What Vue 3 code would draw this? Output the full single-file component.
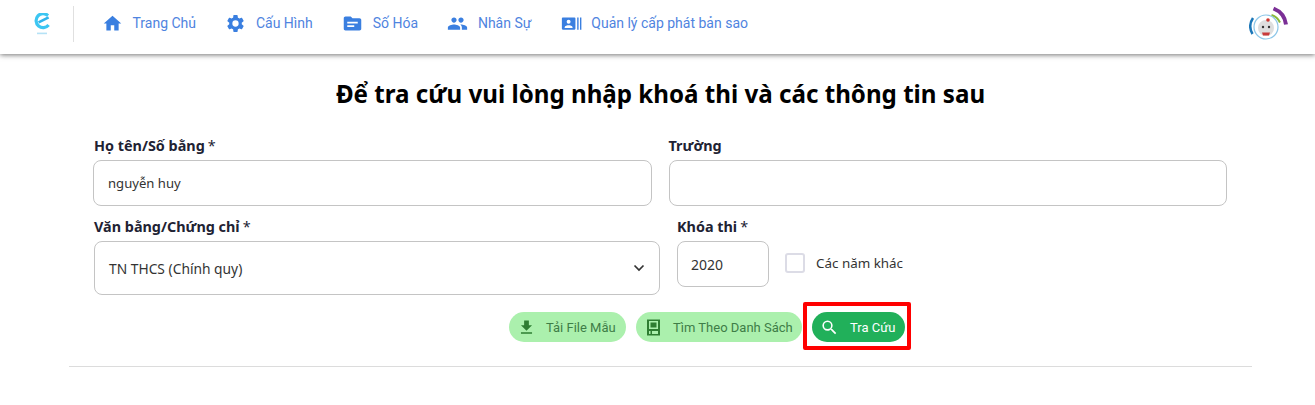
<script setup>
const nav = [
  { label: 'Trang Chủ', key: 'home' },
  { label: 'Cấu Hình', key: 'gear' },
  { label: 'Số Hóa', key: 'folder' },
  { label: 'Nhân Sự', key: 'people' },
  { label: 'Quản lý cấp phát bản sao', key: 'card' },
]
const paths = {
  home: 'M10 20v-6h4v6h5v-8h3L12 3 2 12h3v8z',
  gear: 'M19.14 12.94c.04-.3.06-.61.06-.94 0-.32-.02-.64-.07-.94l2.03-1.58a.49.49 0 0 0 .12-.61l-1.92-3.32a.49.49 0 0 0-.59-.22l-2.39.96c-.5-.38-1.03-.7-1.62-.94l-.36-2.54a.48.48 0 0 0-.48-.41h-3.84c-.24 0-.43.17-.47.41l-.36 2.54c-.59.24-1.13.57-1.62.94l-2.39-.96c-.22-.08-.47 0-.59.22L2.74 8.87c-.12.21-.08.47.12.61l2.03 1.58c-.05.3-.09.63-.09.94s.02.64.07.94l-2.03 1.58a.49.49 0 0 0-.12.61l1.92 3.32c.12.22.37.29.59.22l2.39-.96c.5.38 1.03.7 1.62.94l.36 2.54c.05.24.24.41.48.41h3.84c.24 0 .44-.17.47-.41l.36-2.54c.59-.24 1.13-.56 1.62-.94l2.39.96c.22.08.47 0 .59-.22l1.92-3.32c.12-.22.07-.47-.12-.61l-2.01-1.58zM12 15.6A3.6 3.6 0 1 1 12 8.4a3.6 3.6 0 0 1 0 7.2z',
  folder: 'M20 6h-8l-2-2H4c-1.1 0-2 .9-2 2v12c0 1.1.9 2 2 2h16c1.1 0 2-.9 2-2V8c0-1.1-.9-2-2-2zm-6 10H6v-2h8v2zm4-4H6v-2h12v2z',
  people: 'M16 11c1.66 0 2.99-1.34 2.99-3S17.66 5 16 5s-3 1.34-3 3 1.34 3 3 3zm-8 0c1.66 0 2.99-1.34 2.99-3S9.66 5 8 5 5 6.34 5 8s1.34 3 3 3zm0 2c-2.33 0-7 1.17-7 3.5V19h14v-2.5C15 14.17 10.33 13 8 13zm8 0c-.29 0-.62.02-.97.05 1.16.84 1.97 1.97 1.97 3.45V19h6v-2.5c0-2.33-4.67-3.5-7-3.5z',
  card: 'M18.5 5v14h1.6V5h-1.6zm3.2 0v14h1.6V5h-1.6zM15.5 5H2c-.55 0-1 .45-1 1v12c0 .55.45 1 1 1h13.5c.55 0 1-.45 1-1V6c0-.55-.45-1-1-1zM8.7 7.75a2.25 2.25 0 1 1 0 4.5 2.25 2.25 0 0 1 0-4.5zM13.2 17h-9v-.75c0-1.5 3-2.25 4.5-2.25s4.5.75 4.5 2.25V17z',
}
</script>

<template>
  <div class="page">
    <header class="topbar">
      <div class="brand">
        <svg class="logo" width="18" height="24" viewBox="0 0 18 24">
          <path d="M15 2.6A7 7 0 1 0 15.6 12" stroke="#3cc6f2" stroke-width="3.2" fill="none"/>
          <path d="M15.6 4.4 5.6 9.4" stroke="#2fb4ec" stroke-width="2.6" fill="none"/>
          <rect x="4" y="19.6" width="10" height="1.6" fill="#b5e2f6"/>
        </svg>
      </div>
      <nav class="nav">
        <a v-for="item in nav" :key="item.key" class="nav-item">
          <svg class="nav-icon" width="21" height="21" viewBox="0 0 24 24">
            <path :d="paths[item.key]" fill="#3a7fe0"/>
          </svg>
          <span>{{ item.label }}</span>
        </a>
      </nav>
      <svg class="avatar" width="40" height="36" viewBox="0 0 40 36">
        <path d="M4 13 A15 15 0 0 0 3.500 29" stroke="#1c77b8" stroke-width="2.5" fill="none"/>
        <path d="M24.500 3.500 A20 20 0 0 1 37 19.500" stroke="#7b2f96" stroke-width="4" fill="none"/>
        <path d="M22.500 10 A14 14 0 0 1 31 17.500" stroke="#8cb83a" stroke-width="2" fill="none"/>
        <circle cx="17" cy="22" r="12" fill="#fff" stroke="#8cc6e8" stroke-width="1.2"/>
        <circle cx="17" cy="23" r="8" fill="#dedede"/>
        <circle cx="14" cy="22" r="1.2" fill="#333"/>
        <circle cx="20" cy="22" r="1.2" fill="#333"/>
        <circle cx="19" cy="15" r="1.8" fill="#d0352f"/>
        <path d="M13 27.500h8l-1 3h-6z" fill="#c93a3a"/>
      </svg>
    </header>

    <main class="main">
      <h1 class="title">Để tra cứu vui lòng nhập khoá thi và các thông tin sau</h1>
      <section class="form">
        <div class="row row-one">
          <div class="field">
            <label class="label shifted">Họ tên/Số bằng<em>*</em></label>
            <div class="box box-46 name">nguyễn huy</div>
          </div>
          <div class="field">
            <label class="label">Trường</label>
            <div class="box box-46"></div>
          </div>
        </div>
        <div class="row row-two">
          <div class="field select-field">
            <label class="label">Văn bằng/Chứng chỉ<em>*</em></label>
            <div class="box box-54 select">
              <span>TN THCS (Chính quy)</span>
              <svg width="12" height="8" viewBox="0 0 12 8"><path d="M1.500 1.500 6 6l4.500-4.500" stroke="#333" stroke-width="1.700" fill="none"/></svg>
            </div>
          </div>
          <div class="field year-field">
            <label class="label">Khóa thi<em>*</em></label>
            <div class="box box-46 year">2020</div>
          </div>
          <div class="check">
            <span class="checkbox"></span>
            <span>Các năm khác</span>
          </div>
        </div>
        <div class="actions">
          <button class="btn light first">
            <svg width="19" height="19" viewBox="0 0 24 24"><path d="M19 9h-4V3H9v6H5l7 7 7-7zM5 18v2h14v-2H5z" fill="#2e7d32"/></svg>
            <span>Tải File Mẫu</span>
          </button>
          <button class="btn light second">
            <svg width="19" height="19" viewBox="0 0 19 19"><path d="M3 1.500h13v16H3zM5 3v8h9V3zM6.500 4.500h6v5h-6zM5 13v3h1.500v-3zM8 13v3h6v-3z" fill="#2e7d32" fill-rule="evenodd"/></svg>
            <span>Tìm Theo Danh Sách</span>
          </button>
          <div class="highlight">
            <button class="btn solid">
              <svg width="19" height="19" viewBox="0 0 24 24"><path d="M15.500 14h-.79l-.28-.27A6.470 6.470 0 0 0 16 9.500 6.500 6.500 0 1 0 9.500 16c1.610 0 3.090-.59 4.230-1.570l.27.28v.79l5 4.990L20.490 19l-4.990-5zm-6 0A4.500 4.500 0 1 1 9.500 5a4.500 4.500 0 0 1 0 9z" fill="#fff"/></svg>
              <span>Tra Cứu</span>
            </button>
          </div>
        </div>
      </section>
      <hr class="rule" />
    </main>
  </div>
</template>

<style>
html, body { margin: 0; background: #fff; overflow: hidden; }
</style>

<style scoped>
.page { width: 1315px; height: 405px; background: #fff; font-family: "Noto Sans", sans-serif; color: #212529; }
.topbar {
  height: 54px; display: flex; align-items: flex-start; background: #fff;
  box-shadow: 0 1px 5px rgba(0,0,0,.55); position: relative; padding-right: 26px; box-sizing: border-box;
}
.brand { width: 73px; height: 36px; margin-top: 6px; border-right: 1px solid #e0e0e0; display: flex; justify-content: flex-end; }
.logo { margin: 7px 22px 0 0; }
.nav { display: flex; flex: 1; margin-left: 28px; margin-top: 13px; gap: 29.400px; font-family: Roboto, sans-serif; font-size: 14px; color: #4f84e0; }
.nav-item { display: flex; align-items: center; gap: 9.500px; height: 20px; }
.avatar { margin-top: 5px; }
.main { padding: 0 63px 0 69px; }
.title { margin: 26px 0 0; height: 27px; font-size: 24.150px; line-height: 27px; font-weight: 700; text-align: center; color: #000; }
.form { padding: 0 25px 0 24px; margin-top: 29px; }
.row { display: flex; }
.row-one { gap: 17px; }
.row-one .field { width: 559px; }
.row-two { margin-top: 11px; gap: 17px; align-items: flex-start; padding-left: 1px; }
.select-field { width: 566px; }
.year-field { width: 92px; }
.label { display: block; height: 24px; font-size: 14.400px; line-height: 20px; font-weight: 700; color: #212233; }
.shifted { padding-left: 1px; }
.label em { font-style: normal; font-weight: 400; margin-left: 3px; }
.box {
  border: 1px solid #c4c4c4; border-radius: 8px; box-sizing: border-box; padding: 0 14px;
  font-size: 14px; display: flex; align-items: center; color: #333; background: #fff;
}
.name { font-size: 13.100px; }
.year { padding-left: 13px; }
.box-46 { height: 46px; }
.box-54 { height: 54px; font-size: 13.800px; }
.select { justify-content: space-between; }
.check { display: flex; align-items: center; gap: 11px; margin-top: 35px; margin-left: -1px; font-size: 13.400px; color: #333; height: 22px; }
.checkbox { width: 20px; height: 20px; border: 2px solid #dcdce6; border-radius: 3px; box-sizing: border-box; display: block; }
.actions { display: flex; align-items: center; margin-top: 17px; padding-left: 416px; height: 30px; }
.btn { height: 30px; border: 0; border-radius: 15px; display: flex; align-items: center; font-family: Roboto, sans-serif; font-size: 13px; padding: 0; box-sizing: border-box; flex: none; }
.light { background: #abf0ad; color: #3e7d47; }
.first { width: 117px; padding-left: 8px; gap: 10px; }
.second { width: 166px; margin-left: 10px; padding-left: 8px; gap: 10px; }
.highlight { border: 4px solid #f00; border-radius: 2px; width: 108px; height: 48px; box-sizing: border-box; margin: -10px 0 0 1px; align-self: flex-start; display: flex; align-items: flex-start; justify-content: flex-end; flex: none; }
.solid { width: 93px; margin: 6px 2px 0 0; background: #21b05a; color: #fff; padding-left: 8px; gap: 11px; }
.rule { border: 0; border-top: 1px solid #dcdcdc; margin: 24px 0 0; }
</style>
